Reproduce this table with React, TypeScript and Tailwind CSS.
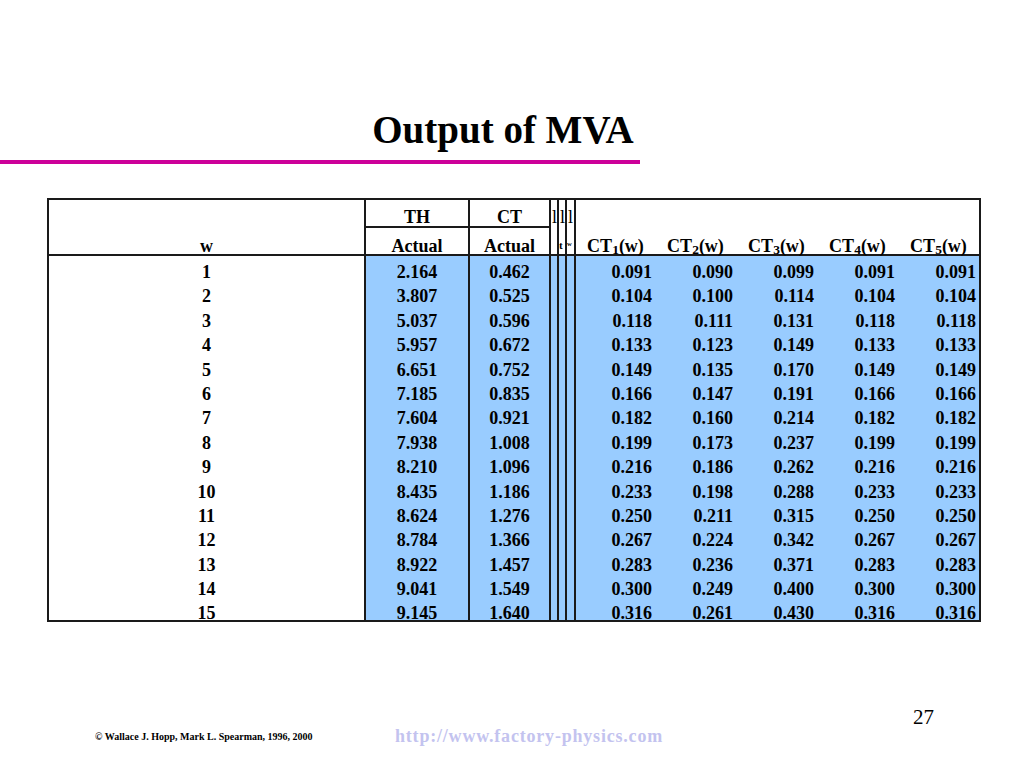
import React from "react";

const TH = ["2.164","3.807","5.037","5.957","6.651","7.185","7.604","7.938","8.210","8.435","8.624","8.784","8.922","9.041","9.145"];
const CT = ["0.462","0.525","0.596","0.672","0.752","0.835","0.921","1.008","1.096","1.186","1.276","1.366","1.457","1.549","1.640"];
const C1 = ["0.091","0.104","0.118","0.133","0.149","0.166","0.182","0.199","0.216","0.233","0.250","0.267","0.283","0.300","0.316"];
const C2 = ["0.090","0.100","0.111","0.123","0.135","0.147","0.160","0.173","0.186","0.198","0.211","0.224","0.236","0.249","0.261"];
const C3 = ["0.099","0.114","0.131","0.149","0.170","0.191","0.214","0.237","0.262","0.288","0.315","0.342","0.371","0.400","0.430"];

const cols = "grid grid-cols-[315px_104px_81px_8px_8px_9px_81px_81px_81px_81px_81px]";

function CTHead({ n }: { n: number }) {
  return (
    <div className="row-span-2 pt-[34px] leading-[24px] text-center whitespace-nowrap">
      CT<sub className="bottom-[-0.15em]">{n}</sub>(w)
    </div>
  );
}

function Narrow({ bottom }: { bottom?: string }) {
  return (
    <div className="row-span-2 border-l-2 border-[#1a1a1a] leading-[24px]">
      <div className="pt-[5px] pl-[1px] text-[18px] font-normal">l</div>
      {bottom ? <div className="pt-[4px] text-[11px] leading-[24px]">{bottom}</div> : null}
    </div>
  );
}

export default function App() {
  return (
    <div className="w-[1024px] h-[768px] bg-white overflow-hidden text-black font-['Liberation_Serif','Times_New_Roman',serif]">
      <h1 className="pt-[110px] w-[1006px] text-center text-[39px] leading-[39px] font-bold">Output of MVA</h1>
      <div className="mt-[11px] h-[4px] w-[640px] bg-[#cc0099]" />

      <div className="mt-[34px] ml-[47px] w-[934px] h-[424px] border-2 border-[#1a1a1a] overflow-hidden font-bold text-[18px]">
        {/* header */}
        <div className={`${cols} grid-rows-[28px_26px] border-b-2 border-[#1a1a1a]`}>
          <div className="row-span-2 pt-[34px] leading-[24px] text-center">w</div>
          <div className="border-l-2 border-b-2 border-[#1a1a1a] pt-[5px] leading-[24px] text-center">TH</div>
          <div className="border-l-2 border-b-2 border-[#1a1a1a] pt-[5px] leading-[24px] text-center">CT</div>
          <Narrow />
          <Narrow bottom="t" />
          <Narrow bottom="ʷ" />
          <div className="row-span-2 border-l-2 border-[#1a1a1a] pt-[34px] leading-[24px] text-center whitespace-nowrap">
            CT<sub className="bottom-[-0.15em]">1</sub>(w)
          </div>
          <CTHead n={2} />
          <CTHead n={3} />
          <CTHead n={4} />
          <CTHead n={5} />
          <div className="border-l-2 border-[#1a1a1a] pt-[6px] leading-[24px] text-center">Actual</div>
          <div className="border-l-2 border-[#1a1a1a] pt-[6px] leading-[24px] text-center">Actual</div>
        </div>

        {/* body */}
        <div className={`${cols} auto-rows-[24.4px]`}>
          {TH.map((th, i) => (
            <React.Fragment key={i}>
              <div className="pt-[4px] leading-[24px] text-center">{i + 1}</div>
              <div className="bg-[#99ccff] border-l-2 border-[#1a1a1a] pt-[4px] leading-[24px] text-center">{th}</div>
              <div className="bg-[#99ccff] border-l-2 border-[#1a1a1a] pt-[4px] leading-[24px] text-center">{CT[i]}</div>
              <div className="bg-[#99ccff] border-l-2 border-[#1a1a1a]" />
              <div className="bg-[#99ccff] border-l-2 border-[#1a1a1a]" />
              <div className="bg-[#99ccff] border-l-2 border-[#1a1a1a]" />
              <div className="bg-[#99ccff] border-l-2 border-[#1a1a1a] pt-[4px] pr-[3px] leading-[24px] text-right">{C1[i]}</div>
              <div className="bg-[#99ccff] pt-[4px] pr-[3px] leading-[24px] text-right">{C2[i]}</div>
              <div className="bg-[#99ccff] pt-[4px] pr-[3px] leading-[24px] text-right">{C3[i]}</div>
              <div className="bg-[#99ccff] pt-[4px] pr-[3px] leading-[24px] text-right">{C1[i]}</div>
              <div className="bg-[#99ccff] pt-[4px] pr-[3px] leading-[24px] text-right">{C1[i]}</div>
            </React.Fragment>
          ))}
        </div>
      </div>

      <div className="mt-[84.5px] h-[17.5px] pl-[913px] text-[21px] leading-[21px]">27</div>
      <div className="flex items-center h-[24px]">
        <div className="w-[395px] shrink-0 pl-[95px] pt-[2px] text-[10px] leading-[12px] font-bold whitespace-nowrap">
          © Wallace J. Hopp, Mark L. Spearman, 1996, 2000
        </div>
        <div className="text-[18px] leading-[20px] tracking-[0.8px] font-bold text-[#c3c3ef] whitespace-nowrap">
          http://www.factory-physics.com
        </div>
      </div>
    </div>
  );
}
